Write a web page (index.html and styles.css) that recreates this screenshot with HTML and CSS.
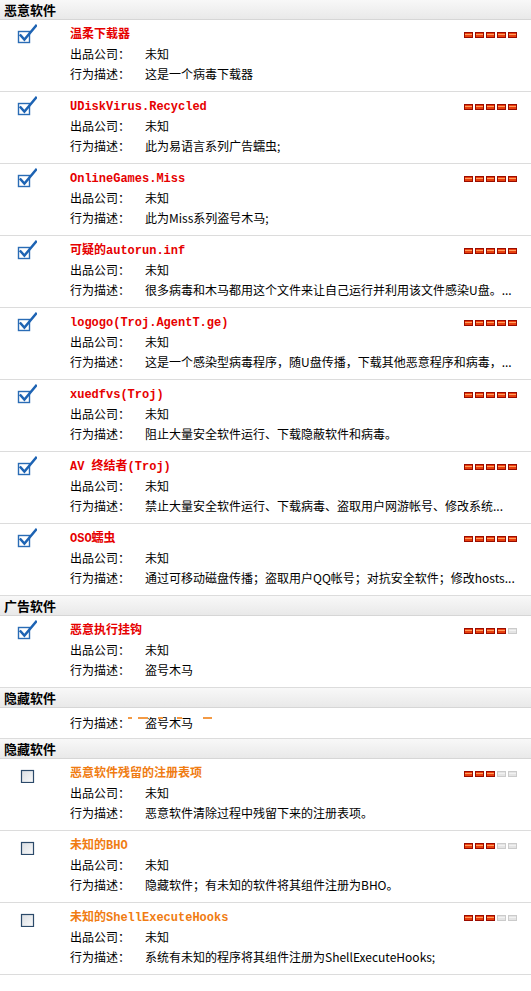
FILE: index.html
```html
<!DOCTYPE html>
<html lang="zh-CN">
<head>
<meta charset="utf-8">
<title>扫描结果</title>
<link rel="stylesheet" href="styles.css">
</head>
<body>
<svg width="0" height="0" class="defs" aria-hidden="true">
  <defs>
    <symbol id="chk-on" viewBox="0 0 20 20">
      <rect x="1.5" y="7.5" width="11" height="11" fill="#fff" stroke="#2a6cb5" stroke-width="1.4"/>
      <path d="M3.6 11.4 L7.4 15.6 L19 1.8" fill="none" stroke="#1d63b3" stroke-width="2.4" stroke-linejoin="miter" stroke-linecap="square"/>
    </symbol>
    <linearGradient id="boxfill" x1="0" y1="0" x2="1" y2="1">
      <stop offset="0" stop-color="#d9dde2"/>
      <stop offset="1" stop-color="#fbfbfb"/>
    </linearGradient>
    <symbol id="chk-off" viewBox="0 0 20 20">
      <rect x="4.5" y="7.5" width="12" height="12" fill="url(#boxfill)" stroke="#2c4a6a" stroke-width="1.2"/>
    </symbol>
  </defs>
</svg>

<div class="section-head">恶意软件</div>

<div class="item">
  <div class="check"><svg width="20" height="20"><use href="#chk-on"/></svg></div>
  <div class="info">
    <div class="title-row"><span class="title red">温柔下载器</span><span class="rating"><i class="on"></i><i class="on"></i><i class="on"></i><i class="on"></i><i class="on"></i></span></div>
    <div class="field"><span class="label">出品公司：</span><span class="value">未知</span></div>
    <div class="field"><span class="label">行为描述：</span><span class="value">这是一个病毒下载器</span></div>
  </div>
</div>

<div class="item">
  <div class="check"><svg width="20" height="20"><use href="#chk-on"/></svg></div>
  <div class="info">
    <div class="title-row"><span class="title red">UDiskVirus.Recycled</span><span class="rating"><i class="on"></i><i class="on"></i><i class="on"></i><i class="on"></i><i class="on"></i></span></div>
    <div class="field"><span class="label">出品公司：</span><span class="value">未知</span></div>
    <div class="field"><span class="label">行为描述：</span><span class="value">此为易语言系列广告蠕虫;</span></div>
  </div>
</div>

<div class="item">
  <div class="check"><svg width="20" height="20"><use href="#chk-on"/></svg></div>
  <div class="info">
    <div class="title-row"><span class="title red">OnlineGames.Miss</span><span class="rating"><i class="on"></i><i class="on"></i><i class="on"></i><i class="on"></i><i class="on"></i></span></div>
    <div class="field"><span class="label">出品公司：</span><span class="value">未知</span></div>
    <div class="field"><span class="label">行为描述：</span><span class="value">此为Miss系列盗号木马;</span></div>
  </div>
</div>

<div class="item">
  <div class="check"><svg width="20" height="20"><use href="#chk-on"/></svg></div>
  <div class="info">
    <div class="title-row"><span class="title red">可疑的autorun.inf</span><span class="rating"><i class="on"></i><i class="on"></i><i class="on"></i><i class="on"></i><i class="on"></i></span></div>
    <div class="field"><span class="label">出品公司：</span><span class="value">未知</span></div>
    <div class="field"><span class="label">行为描述：</span><span class="value">很多病毒和木马都用这个文件来让自己运行并利用该文件感染U盘。...</span></div>
  </div>
</div>

<div class="item">
  <div class="check"><svg width="20" height="20"><use href="#chk-on"/></svg></div>
  <div class="info">
    <div class="title-row"><span class="title red">logogo(Troj.AgentT.ge)</span><span class="rating"><i class="on"></i><i class="on"></i><i class="on"></i><i class="on"></i><i class="on"></i></span></div>
    <div class="field"><span class="label">出品公司：</span><span class="value">未知</span></div>
    <div class="field"><span class="label">行为描述：</span><span class="value">这是一个感染型病毒程序，随U盘传播，下载其他恶意程序和病毒，...</span></div>
  </div>
</div>

<div class="item">
  <div class="check"><svg width="20" height="20"><use href="#chk-on"/></svg></div>
  <div class="info">
    <div class="title-row"><span class="title red">xuedfvs(Troj)</span><span class="rating"><i class="on"></i><i class="on"></i><i class="on"></i><i class="on"></i><i class="on"></i></span></div>
    <div class="field"><span class="label">出品公司：</span><span class="value">未知</span></div>
    <div class="field"><span class="label">行为描述：</span><span class="value">阻止大量安全软件运行、下载隐蔽软件和病毒。</span></div>
  </div>
</div>

<div class="item">
  <div class="check"><svg width="20" height="20"><use href="#chk-on"/></svg></div>
  <div class="info">
    <div class="title-row"><span class="title red">AV 终结者(Troj)</span><span class="rating"><i class="on"></i><i class="on"></i><i class="on"></i><i class="on"></i><i class="on"></i></span></div>
    <div class="field"><span class="label">出品公司：</span><span class="value">未知</span></div>
    <div class="field"><span class="label">行为描述：</span><span class="value">禁止大量安全软件运行、下载病毒、盗取用户网游帐号、修改系统...</span></div>
  </div>
</div>

<div class="item">
  <div class="check"><svg width="20" height="20"><use href="#chk-on"/></svg></div>
  <div class="info">
    <div class="title-row"><span class="title red">OSO蠕虫</span><span class="rating"><i class="on"></i><i class="on"></i><i class="on"></i><i class="on"></i><i class="on"></i></span></div>
    <div class="field"><span class="label">出品公司：</span><span class="value">未知</span></div>
    <div class="field"><span class="label">行为描述：</span><span class="value">通过可移动磁盘传播；盗取用户QQ帐号；对抗安全软件；修改hosts...</span></div>
  </div>
</div>

<div class="section-head">广告软件</div>

<div class="item">
  <div class="check"><svg width="20" height="20"><use href="#chk-on"/></svg></div>
  <div class="info">
    <div class="title-row"><span class="title red">恶意执行挂钩</span><span class="rating"><i class="on"></i><i class="on"></i><i class="on"></i><i class="on"></i><i></i></span></div>
    <div class="field"><span class="label">出品公司：</span><span class="value">未知</span></div>
    <div class="field"><span class="label">行为描述：</span><span class="value">盗号木马</span></div>
  </div>
</div>

<div class="section-head">隐藏软件</div>

<div class="item partial">
  <div class="check"></div>
  <div class="info">
    <div class="field"><span class="label">行为描述：</span><span class="value">盗号木马</span></div>
    <span class="glitch g1"></span><span class="glitch g2"></span><span class="glitch g3"></span><span class="glitch g4"></span><span class="glitch g5"></span>
  </div>
</div>

<div class="section-head">隐藏软件</div>

<div class="item">
  <div class="check"><svg width="20" height="20"><use href="#chk-off"/></svg></div>
  <div class="info">
    <div class="title-row"><span class="title orange">恶意软件残留的注册表项</span><span class="rating"><i class="on"></i><i class="on"></i><i class="on"></i><i></i><i></i></span></div>
    <div class="field"><span class="label">出品公司：</span><span class="value">未知</span></div>
    <div class="field"><span class="label">行为描述：</span><span class="value">恶意软件清除过程中残留下来的注册表项。</span></div>
  </div>
</div>

<div class="item">
  <div class="check"><svg width="20" height="20"><use href="#chk-off"/></svg></div>
  <div class="info">
    <div class="title-row"><span class="title orange">未知的BHO</span><span class="rating"><i class="on"></i><i class="on"></i><i class="on"></i><i></i><i></i></span></div>
    <div class="field"><span class="label">出品公司：</span><span class="value">未知</span></div>
    <div class="field"><span class="label">行为描述：</span><span class="value">隐藏软件；有未知的软件将其组件注册为BHO。</span></div>
  </div>
</div>

<div class="item">
  <div class="check"><svg width="20" height="20"><use href="#chk-off"/></svg></div>
  <div class="info">
    <div class="title-row"><span class="title orange">未知的ShellExecuteHooks</span><span class="rating"><i class="on"></i><i class="on"></i><i class="on"></i><i></i><i></i></span></div>
    <div class="field"><span class="label">出品公司：</span><span class="value">未知</span></div>
    <div class="field"><span class="label">行为描述：</span><span class="value">系统有未知的程序将其组件注册为ShellExecuteHooks;</span></div>
  </div>
</div>

</body>
</html>
```

FILE: styles.css
```css
html, body {
  margin: 0;
  padding: 0;
  background: #fff;
}

body {
  font-family: "Noto Sans CJK SC", "Noto Sans", sans-serif;
  font-size: 12px;
  color: #000;
}

.defs {
  position: absolute;
  width: 0;
  height: 0;
  overflow: hidden;
}

.section-head {
  height: 19px;
  line-height: 19px;
  padding-left: 4px;
  font-size: 13px;
  font-weight: bold;
  color: #000;
  background: linear-gradient(#f8f8f8, #e9e9e9);
  border-bottom: 1px solid #d6d6d6;
}

.item {
  display: flex;
  padding: 4px 14px 7px 0;
  border-bottom: 1px solid #dcdcdc;
}

.item.partial {
  padding: 5px 14px 5px 0;
}

.check {
  width: 70px;
  flex: none;
}

.check svg {
  display: block;
  margin-left: 17px;
}

.info {
  flex: 1;
  min-width: 0;
  position: relative;
}

.title-row {
  display: flex;
  justify-content: space-between;
  align-items: flex-start;
  height: 20px;
}

.title {
  font-family: "Liberation Mono", "Noto Sans CJK SC", monospace;
  font-weight: bold;
  font-size: 12px;
  padding-top: 2px;
  line-height: 18px;
  white-space: nowrap;
}

.title.red {
  color: #e60000;
}

.title.orange {
  color: #f07c12;
}

.rating {
  display: flex;
  gap: 2px;
  margin-top: 8px;
}

.rating i {
  display: block;
  width: 7px;
  height: 4px;
  border: 1px solid #cbcbcb;
  background: linear-gradient(#e4e4e4 0 1px, #f2f2f2 1px 2px, #e4e4e4 2px);
}

.rating i.on {
  border-color: #9a0c00;
  background: linear-gradient(#ee3d0c 0 1px, #ffa060 1px 2px, #e8400e 2px);
}

.field {
  display: grid;
  grid-template-columns: 75px 1fr;
  height: 20px;
  line-height: 20px;
  white-space: nowrap;
}

.value {
  overflow: hidden;
}

.glitch {
  position: absolute;
  top: 4px;
  height: 2px;
  background: #f39a45;
}

.g1 { left: 58px; width: 4px; }
.g2 { left: 68px; width: 10px; }
.g3 { left: 88px; width: 5px; }
.g4 { left: 107px; width: 5px; }
.g5 { left: 133px; width: 9px; }
```
